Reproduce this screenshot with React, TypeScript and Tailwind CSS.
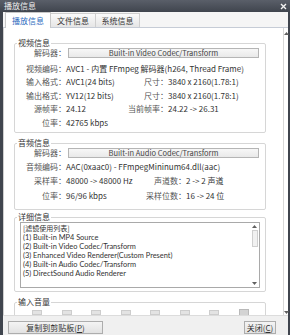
import type { ReactNode } from "react";

const FONT = { fontFamily: '"Noto Sans CJK SC", "Noto Sans", sans-serif' };

function Arrow({ up }: { up?: boolean }) {
  return (
    <svg width="5" height="3" viewBox="0 0 5 3" className="shrink-0">
      <polygon points={up ? "0,3 2.5,0 5,3" : "0,0 2.5,3 5,0"} fill="#606060" />
    </svg>
  );
}

function Group({ title, children, className }: { title: string; children: ReactNode; className: string }) {
  return (
    <fieldset className={`ml-[10px] w-[252px] border border-[#d6d6d6] rounded-[2px] ${className}`}>
      <legend className="ml-[2px] px-[1px] text-[8px] leading-[10px] text-[#333]">{title}</legend>
      {children}
    </fieldset>
  );
}

function Label({ text, w }: { text: string; w: string }) {
  return <div className={`${w} shrink-0 text-right text-[#555]`}>{text}：</div>;
}

function Row({
  h,
  label,
  value,
  right,
  leftW,
  rightW,
}: {
  h: string;
  label: string;
  value: string;
  right?: [string, string];
  leftW?: string;
  rightW?: string;
}) {
  return (
    <div className={`flex items-center ${h} text-[8px] leading-[10px] whitespace-nowrap`}>
      <Label text={label} w="w-[51px]" />
      <div className={`${right ? leftW : ""} shrink-0 text-[#333]`}>{value}</div>
      {right && (
        <>
          <Label text={right[0]} w={rightW ?? ""} />
          <div className="text-[#333]">{right[1]}</div>
        </>
      )}
    </div>
  );
}

function DecoderBox({ text }: { text: string }) {
  return (
    <div className="flex items-center h-[10px] text-[8px] leading-[10px]">
      <Label text="解码器" w="w-[51px]" />
      <div className="ml-[2px] w-[191px] h-[10px] border border-[#b5b5b5] bg-gradient-to-b from-[#f7f7f7] to-[#e9e9e9] flex items-center justify-center text-[#444] text-[7.5px]">
        {text}
      </div>
    </div>
  );
}

export default function App() {
  const filters = [
    "(1) Built-in MP4 Source",
    "(2) Built-in Video Codec/Transform",
    "(3) Enhanced Video Renderer(Custom Present)",
    "(4) Built-in Audio Codec/Transform",
    "(5) DirectSound Audio Renderer",
  ];
  const ticks = [0, 1, 2, 3, 4, 5, 6];

  return (
    <div style={FONT} className="w-[290px] h-[335px] bg-[#40454e] flex flex-col overflow-hidden">
      {/* title bar */}
      <div className="h-[12px] shrink-0 flex items-center justify-between px-[4px] bg-gradient-to-b from-[#5a5f69] to-[#40454e]">
        <span className="text-[8px] leading-[10px] text-[#eeeeee]">播放信息</span>
        <svg width="7" height="7" viewBox="0 0 7 7" className="mr-[-1px]">
          <path d="M1 1 L6 6 M6 1 L1 6" stroke="#f2f2f2" strokeWidth="1.4" />
        </svg>
      </div>

      <div className="flex-1 ml-[3px] mr-[2px] flex flex-col bg-[#f0f0f0] min-h-0">
        {/* tabs */}
        <div className="h-[16px] shrink-0 flex items-end pl-[2px] bg-[#f5f5f5] border-b border-[#c6ccd6] text-[8px]">
          <div className="w-[46px] h-[16px] bg-white border border-b-0 border-[#c8c8c8] flex items-center justify-center text-[#2f6cc0] -mb-px">
            播放信息
          </div>
          <div className="w-[45px] h-[14px] bg-gradient-to-b from-[#fafafa] to-[#e6e6e6] border border-l-0 border-b-0 border-[#cfcfcf] flex items-center justify-center text-[#333]">
            文件信息
          </div>
          <div className="w-[44px] h-[14px] bg-gradient-to-b from-[#fafafa] to-[#e6e6e6] border border-l-0 border-b-0 border-[#cfcfcf] flex items-center justify-center text-[#333]">
            系统信息
          </div>
        </div>

        {/* content + scrollbar */}
        <div className="h-[287px] shrink-0 flex">
          <div className="flex-1 bg-white border-l border-[#cfcfcf] overflow-hidden">
            <Group title="视频信息" className="mt-[10px] pb-[2.5px]">
              <DecoderBox text="Built-in Video Codec/Transform" />
              <div className="mt-[4px]">
                <Row h="h-[13.5px]" label="视频编码" value="AVC1 - 内置 FFmpeg 解码器(h264, Thread Frame)" />
                <Row
                  h="h-[13.5px]"
                  label="输入格式"
                  value="AVC1(24 bits)"
                  right={["尺寸", "3840 x 2160(1.78:1)"]}
                  leftW="w-[62px]"
                  rightW="w-[40px]"
                />
                <Row
                  h="h-[13.5px]"
                  label="输出格式"
                  value="YV12(12 bits)"
                  right={["尺寸", "3840 x 2160(1.78:1)"]}
                  leftW="w-[62px]"
                  rightW="w-[40px]"
                />
                <Row
                  h="h-[13.5px]"
                  label="源帧率"
                  value="24.12"
                  right={["当前帧率", "24.22 -> 26.31"]}
                  leftW="w-[62px]"
                  rightW="w-[40px]"
                />
                <Row h="h-[13.5px]" label="位率" value="42765 kbps" />
              </div>
            </Group>

            <Group title="音频信息" className="mt-[5px] pb-[6px]">
              <DecoderBox text="Built-in Audio Codec/Transform" />
              <div className="mt-[2px]">
                <Row h="h-[14px]" label="音频编码" value="AAC(0xaac0) - FFmpegMininum64.dll(aac)" />
                <Row
                  h="h-[14px]"
                  label="采样率"
                  value="48000 -> 48000 Hz"
                  right={["声道数", "2 -> 2 声道"]}
                  leftW="w-[70px]"
                  rightW="w-[50px]"
                />
                <Row
                  h="h-[15px]"
                  label="位率"
                  value="96/96 kbps"
                  right={["采样位数", "16 -> 24 位"]}
                  leftW="w-[70px]"
                  rightW="w-[50px]"
                />
              </div>
            </Group>

            <Group title="详细信息" className="mt-[2px] pb-[3px]">
              <div className="ml-[5px] w-[240px] h-[66px] border border-[#a9a9a9] bg-white flex">
                <div className="flex-1 pl-[2px] text-[#333] whitespace-nowrap overflow-hidden">
                  <div className="h-[10px] text-[7px] leading-[10px]">[滤镜使用列表]</div>
                  {filters.map((f) => (
                    <div key={f} className="h-[9px] text-[7.4px] leading-[9px] font-['Lato',sans-serif]">
                      {f}
                    </div>
                  ))}
                </div>
                <div className="w-[7px] mr-[1px] flex flex-col items-center pt-[2px] pb-[2px]">
                  <Arrow up />
                  <div className="mt-[2px] w-[6px] h-[17px] border border-[#cfcfcf] bg-[#f1f1f1]" />
                  <div className="flex-1" />
                  <Arrow />
                </div>
              </div>
            </Group>

            <Group title="输入音量" className="mt-[5px] pb-[20px]">
              <div className="mt-[3px] flex items-start pl-[17px] gap-[19.5px]">
                {ticks.map((t) => (
                  <div key={t} className="w-[10px] h-[5px] bg-[#e3e3e3] border border-[#cdcdcd]" />
                ))}
                <div className="w-[10px] h-[7px] -mt-[1px] bg-[#d3d3d3] border border-[#b9b9b9]" />
              </div>
            </Group>
          </div>
          <div className="w-[5px] bg-white border-l border-[#d8d8d8] flex flex-col items-center justify-between pt-[4px] pb-[1px]">
            <Arrow up />
            <Arrow />
          </div>
        </div>

        {/* bottom bar */}
        <div className="flex-1 flex items-start justify-between pt-[5px] pl-[5px] pr-[12px] bg-[#f0f0f0] border-t border-[#dcdcdc] text-[8px]">
          <button className="w-[95px] h-[13px] border border-[#adadad] bg-gradient-to-b from-[#f4f4f4] to-[#e2e2e2] flex items-center justify-center text-[#333] leading-[10px]">
            复制到剪贴板(<u>P</u>)
          </button>
          <button className="w-[32px] h-[13px] border border-[#adadad] bg-gradient-to-b from-[#f4f4f4] to-[#e2e2e2] flex items-center justify-center text-[#333] leading-[10px]">
            关闭(<u>C</u>)
          </button>
        </div>
      </div>
    </div>
  );
}
